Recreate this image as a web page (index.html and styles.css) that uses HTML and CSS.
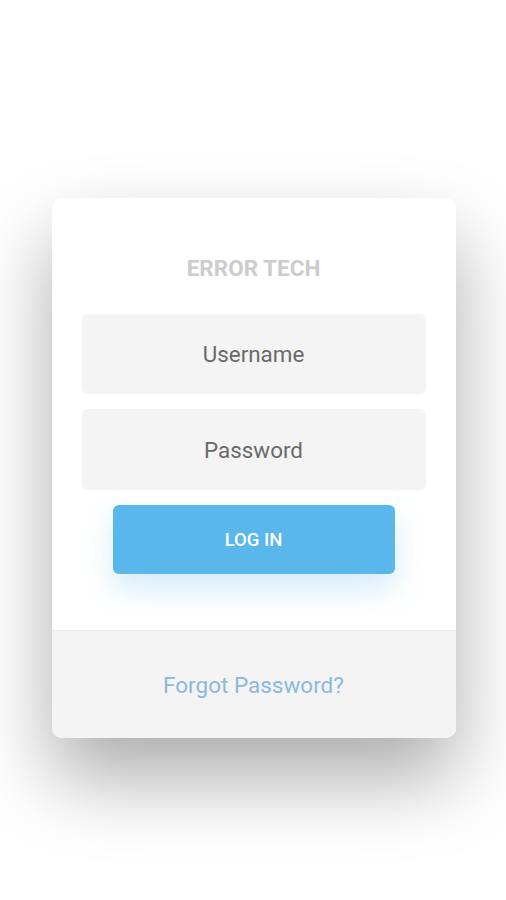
FILE: index.html
```html
<!DOCTYPE html>
<html>
<head>
<meta charset="utf-8">
<link rel="stylesheet" href="styles.css">
</head>
<body>
<div class="page">
  <div class="card">
    <div class="card-body">
      <h1 class="title">ERROR TECH</h1>
      <div class="field">Username</div>
      <div class="field">Password</div>
      <button class="login">LOG IN</button>
    </div>
    <div class="card-footer">
      <a class="forgot">Forgot Password?</a>
    </div>
  </div>
</div>
</body>
</html>
```

FILE: styles.css
```css
html, body {
  margin: 0;
  padding: 0;
  background: #ffffff;
  font-family: Roboto, "Liberation Sans", sans-serif;
}
.page {
  width: 506px;
  height: 900px;
  padding: 198px 0 0 1px;
  box-sizing: border-box;
  display: flex;
  flex-direction: column;
  align-items: center;
}
.card {
  width: 404px;
  background: #ffffff;
  border-radius: 10px;
  box-shadow: 0 40px 80px rgba(0, 0, 0, 0.33);
  overflow: hidden;
}
.card-body {
  padding: 57px 30px 56px;
  display: flex;
  flex-direction: column;
  align-items: stretch;
}
.title {
  margin: 0 0 33px;
  font-size: 22.5px;
  line-height: 26px;
  font-weight: 700;
  color: #cccccc;
  text-align: center;
}
.field {
  height: 80px;
  background: #f4f4f4;
  border-radius: 6px;
  display: flex;
  align-items: center;
  justify-content: center;
  font-size: 22.4px;
  color: #6a6a6a;
  margin-bottom: 15px;
}
.field + .field {
  height: 81px;
  margin-bottom: 15px;
}
.login {
  margin: 0 31px;
  height: 69px;
  border: none;
  border-radius: 6px;
  background: #59b7ec;
  color: #ffffff;
  font-family: Roboto, "Liberation Sans", sans-serif;
  font-size: 18.5px;
  font-weight: 500;
  box-shadow: 0 14px 30px rgba(89, 183, 236, 0.28);
}
.card-footer {
  border-top: 1px solid #ebebeb;
  background: #f4f4f4;
  height: 107px;
  display: flex;
  align-items: center;
  justify-content: center;
}
.forgot {
  font-size: 22.5px;
  color: #8db8de;
}
```
